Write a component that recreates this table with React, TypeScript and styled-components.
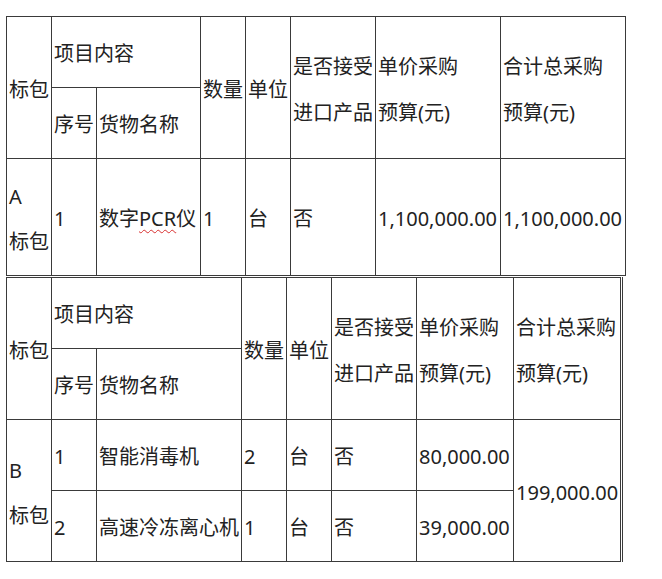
import styled, { createGlobalStyle } from 'styled-components';

const GlobalStyle = createGlobalStyle`
  html, body {
    margin: 0;
    padding: 0;
    background: #ffffff;
  }
`

const Page = styled.div`
  padding: 16px 0 0 6px;
  display: flex;
  flex-direction: column;
  gap: 1px;
  font-family: "Noto Sans", "Noto Sans CJK SC", sans-serif;
  font-size: 20px;
  color: #222222;
`

const Table = styled.table<{ $doubleRight?: boolean }>`
  border-collapse: collapse;
  table-layout: fixed;
  ${p => p.$doubleRight && 'border-right: 3px double #3a3a3a;'}
`

const Row = styled.tr<{ $h: number }>`
  height: ${p => p.$h}px;
`

const Cell = styled.td`
  border: 1px solid #3a3a3a;
  padding: 4px 2px 0 2px;
  line-height: 46px;
  vertical-align: middle;
  text-align: left;
  white-space: nowrap;
  overflow: hidden;
`

const TallCell = styled(Cell)`
  line-height: 45px;
`

const Misspelled = styled.span`
  text-decoration: underline wavy #d83030;
  text-decoration-thickness: 1px;
  text-underline-offset: 3px;
`

const widthsA = [45, 45, 104, 45, 45, 85, 125, 125];
const widthsB = [45, 45, 145, 45, 45, 85, 97, 108];

function Cols({ widths }: { widths: number[] }) {
  return (
    <colgroup>
      {widths.map((w, i) => <col key={i} style={{ width: w }} />)}
    </colgroup>
  )
}

function Header() {
  return (
    <>
      <Row $h={71}>
        <Cell rowSpan={2}>标包</Cell>
        <Cell colSpan={2}>项目内容</Cell>
        <Cell rowSpan={2}>数量</Cell>
        <Cell rowSpan={2}>单位</Cell>
        <Cell rowSpan={2}>是否接受<br />进口产品</Cell>
        <Cell rowSpan={2}>单价采购<br />预算(元)</Cell>
        <Cell rowSpan={2}>合计总采购<br />预算(元)</Cell>
      </Row>
      <Row $h={71}>
        <Cell>序号</Cell>
        <Cell>货物名称</Cell>
      </Row>
    </>
  )
}

export default function App() {
  return (
    <>
      <GlobalStyle />
      <Page>
        <Table style={{ width: 620 }}>
          <Cols widths={widthsA} />
          <tbody>
            <Header />
            <Row $h={117}>
              <TallCell>A<br />标包</TallCell>
              <Cell>1</Cell>
              <Cell>数字<Misspelled>PCR</Misspelled>仪</Cell>
              <Cell>1</Cell>
              <Cell>台</Cell>
              <Cell>否</Cell>
              <Cell>1,100,000.00</Cell>
              <Cell>1,100,000.00</Cell>
            </Row>
          </tbody>
        </Table>
        <Table $doubleRight style={{ width: 616 }}>
          <Cols widths={widthsB} />
          <tbody>
            <Header />
            <Row $h={71}>
              <TallCell rowSpan={2}>B<br />标包</TallCell>
              <Cell>1</Cell>
              <Cell>智能消毒机</Cell>
              <Cell>2</Cell>
              <Cell>台</Cell>
              <Cell>否</Cell>
              <Cell>80,000.00</Cell>
              <Cell rowSpan={2}>199,000.00</Cell>
            </Row>
            <Row $h={71}>
              <Cell>2</Cell>
              <Cell>高速冷冻离心机</Cell>
              <Cell>1</Cell>
              <Cell>台</Cell>
              <Cell>否</Cell>
              <Cell>39,000.00</Cell>
            </Row>
          </tbody>
        </Table>
      </Page>
    </>
  )
}
